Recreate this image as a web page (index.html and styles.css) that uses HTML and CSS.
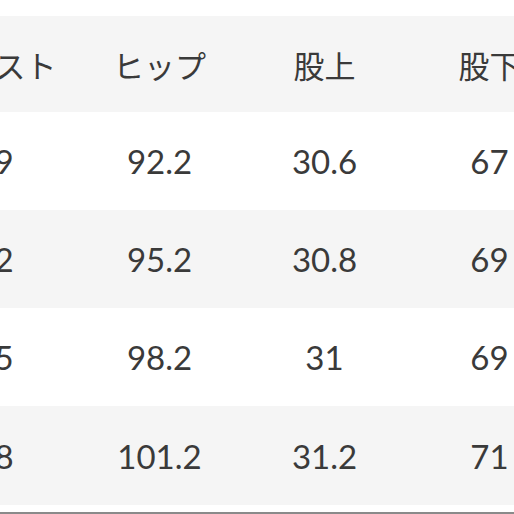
FILE: index.html
```html
<!DOCTYPE html>
<html lang="ja">
<head>
<meta charset="utf-8">
<link rel="stylesheet" href="styles.css">
</head>
<body>
<div class="sheet">
  <div class="table">
    <div class="row head"><div>ウエスト</div><div>ヒップ</div><div>股上</div><div>股下</div></div>
    <div class="row"><div>69</div><div>92.2</div><div>30.6</div><div>67</div></div>
    <div class="row alt"><div>72</div><div>95.2</div><div>30.8</div><div>69</div></div>
    <div class="row"><div>75</div><div>98.2</div><div>31</div><div>69</div></div>
    <div class="row alt last"><div>78</div><div>101.2</div><div>31.2</div><div>71</div></div>
  </div>
  <div class="rule"></div>
</div>
</body>
</html>
```
FILE: styles.css
```css
html, body {
  margin: 0;
  padding: 0;
  background: #fff;
  overflow: hidden;
}
.sheet {
  width: 514px;
  height: 514px;
  overflow: hidden;
  padding-top: 16px;
  box-sizing: border-box;
}
.table {
  margin-left: -88px;
  width: 680px;
}
.row {
  display: grid;
  grid-template-columns: repeat(4, 165px);
  height: 98px;
  align-items: center;
  font-family: Lato, "Noto Sans CJK JP", sans-serif;
  font-size: 33px;
  color: #3a3a3a;
}
.row > div {
  text-align: center;
}
.head {
  height: 96px;
  background: #f5f5f5;
  font-size: 31px;
  font-family: "Noto Sans CJK JP", sans-serif;
  font-weight: 400;
}
.alt {
  background: #f5f5f5;
}
.last {
  height: 99px;
}
.rule {
  margin-top: 7px;
  height: 2px;
  background: #8a8a8a;
}
```
